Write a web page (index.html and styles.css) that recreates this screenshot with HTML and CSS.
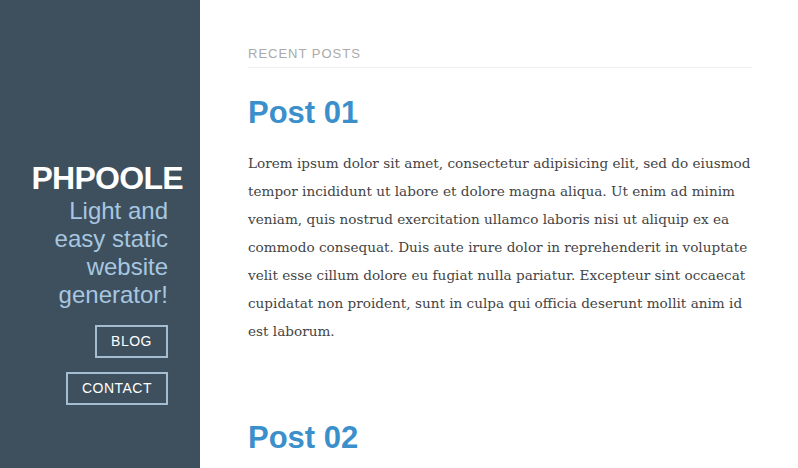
FILE: index.html
```html
<!DOCTYPE html>
<html lang="en">
<head>
<meta charset="utf-8">
<title>PHPoole</title>
<link rel="stylesheet" href="styles.css">
</head>
<body>
<div class="page">
  <aside class="sidebar">
    <h1 class="site-title">PHPOOLE</h1>
    <p class="tagline">Light and<br>easy static<br>website<br>generator!</p>
    <nav class="menu">
      <a class="menu-btn" href="#">BLOG</a>
      <a class="menu-btn" href="#">CONTACT</a>
    </nav>
  </aside>
  <main class="content">
    <h2 class="section-title">RECENT POSTS</h2>
    <article class="post">
      <h3 class="post-title">Post 01</h3>
      <p class="post-body">Lorem ipsum dolor sit amet, consectetur adipisicing elit, sed do eiusmod tempor incididunt ut labore et dolore magna aliqua. Ut enim ad minim veniam, quis nostrud exercitation ullamco laboris nisi ut aliquip ex ea commodo consequat. Duis aute irure dolor in reprehenderit in voluptate velit esse cillum dolore eu fugiat nulla pariatur. Excepteur sint occaecat cupidatat non proident, sunt in culpa qui officia deserunt mollit anim id est laborum.</p>
    </article>
    <article class="post">
      <h3 class="post-title">Post 02</h3>
    </article>
  </main>
</div>
</body>
</html>
```

FILE: styles.css
```css
html, body {
  margin: 0;
  padding: 0;
  height: 100%;
  overflow: hidden;
  background: #fff;
}
.page {
  display: flex;
  min-height: 100vh;
}
.sidebar {
  width: 200px;
  flex: 0 0 200px;
  background: #3e4f5d;
  display: flex;
  flex-direction: column;
  align-items: flex-end;
  padding: 160px 32px 0 0;
  box-sizing: border-box;
  font-family: "Liberation Sans", Arial, sans-serif;
}
.site-title {
  margin: 0 -15px 1px 0;
  font-size: 32px;
  line-height: 36px;
  font-weight: bold;
  color: #fff;
  letter-spacing: -0.7px;
}
.tagline {
  margin: 0;
  font-size: 24px;
  line-height: 28px;
  color: #a7c7e0;
  text-align: right;
}
.menu {
  display: flex;
  flex-direction: column;
  align-items: flex-end;
  gap: 14px;
  margin-top: 16px;
}
.menu-btn {
  display: block;
  border: 2px solid #a5bdd0;
  padding: 0 14px;
  line-height: 29px;
  font-size: 14px;
  letter-spacing: 0.5px;
  color: #fff;
  text-decoration: none;
}
.content {
  flex: 0 0 504px;
  margin-left: 48px;
  padding-top: 46px;
  font-family: "DejaVu Serif", Georgia, serif;
}
.section-title {
  margin: 0;
  padding-bottom: 5px;
  border-bottom: 1px solid #eee;
  font-family: "Liberation Sans", Arial, sans-serif;
  font-size: 13px;
  line-height: 16px;
  font-weight: normal;
  letter-spacing: 1px;
  color: #aaa;
}
.post {
  margin-top: 27px;
}
.post + .post {
  margin-top: 75px;
}
.post-title {
  margin: 0;
  font-family: "Liberation Sans", Arial, sans-serif;
  font-size: 31px;
  line-height: 36px;
  font-weight: bold;
  color: #3b8fcb;
}
.post-body {
  margin: 18px 0 0;
  font-size: 13.6px;
  line-height: 28px;
  color: #444;
}
```
